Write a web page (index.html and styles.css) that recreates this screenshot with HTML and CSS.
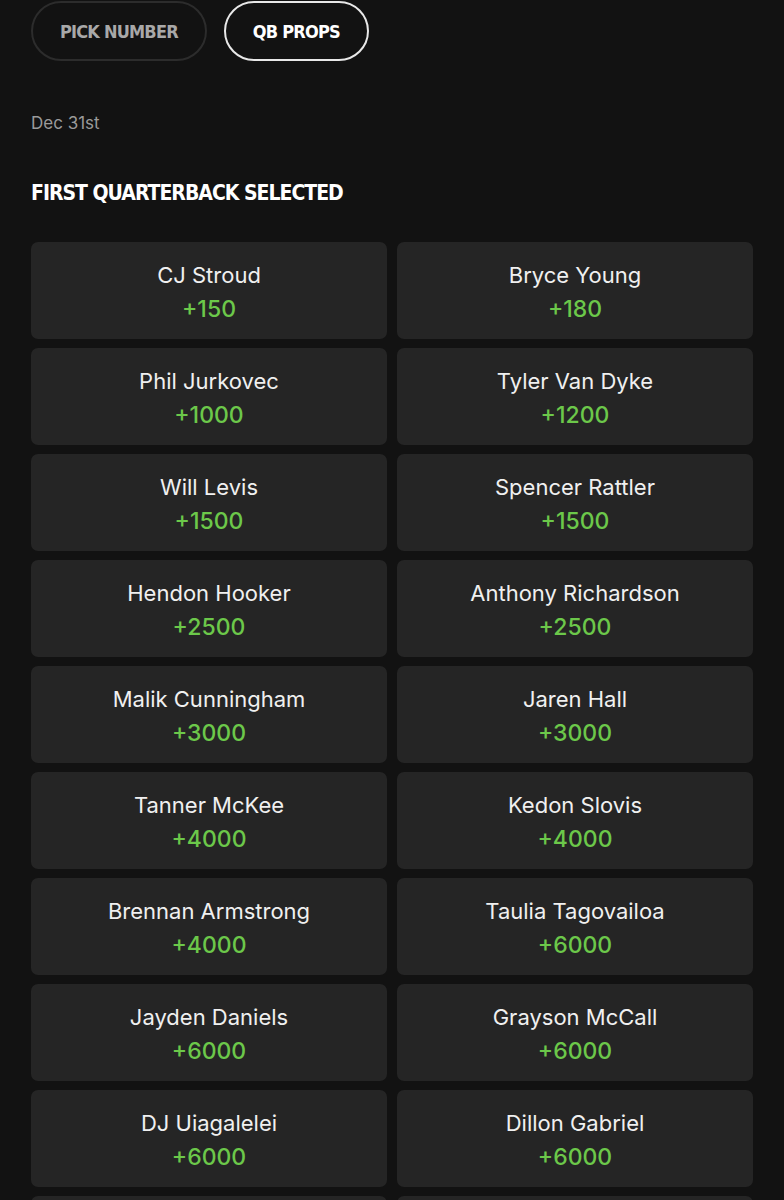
FILE: index.html
```html
<!DOCTYPE html>
<html lang="en">
<head>
  <meta charset="UTF-8">
  <meta name="viewport" content="width=device-width, initial-scale=1.0">
  <title>QB Props</title>
  <link rel="stylesheet" href="styles.css">
</head>
<body>
  <!-- Tabs -->
  <div class="tabs">
    <button class="tab">PICK NUMBER</button>
    <button class="tab active">QB PROPS</button>
  </div>

  <p class="date">Dec 31st</p>

  <h2 class="market-title">FIRST QUARTERBACK SELECTED</h2>

  <!-- Odds grid -->
  <div class="odds-grid">
    <div class="odd-card"><span class="name">CJ Stroud</span><span class="price">+150</span></div>
    <div class="odd-card"><span class="name">Bryce Young</span><span class="price">+180</span></div>
    <div class="odd-card"><span class="name">Phil Jurkovec</span><span class="price">+1000</span></div>
    <div class="odd-card"><span class="name">Tyler Van Dyke</span><span class="price">+1200</span></div>
    <div class="odd-card"><span class="name">Will Levis</span><span class="price">+1500</span></div>
    <div class="odd-card"><span class="name">Spencer Rattler</span><span class="price">+1500</span></div>
    <div class="odd-card"><span class="name">Hendon Hooker</span><span class="price">+2500</span></div>
    <div class="odd-card"><span class="name">Anthony Richardson</span><span class="price">+2500</span></div>
    <div class="odd-card"><span class="name">Malik Cunningham</span><span class="price">+3000</span></div>
    <div class="odd-card"><span class="name">Jaren Hall</span><span class="price">+3000</span></div>
    <div class="odd-card"><span class="name">Tanner McKee</span><span class="price">+4000</span></div>
    <div class="odd-card"><span class="name">Kedon Slovis</span><span class="price">+4000</span></div>
    <div class="odd-card"><span class="name">Brennan Armstrong</span><span class="price">+4000</span></div>
    <div class="odd-card"><span class="name">Taulia Tagovailoa</span><span class="price">+6000</span></div>
    <div class="odd-card"><span class="name">Jayden Daniels</span><span class="price">+6000</span></div>
    <div class="odd-card"><span class="name">Grayson McCall</span><span class="price">+6000</span></div>
    <div class="odd-card"><span class="name">DJ Uiagalelei</span><span class="price">+6000</span></div>
    <div class="odd-card"><span class="name">Dillon Gabriel</span><span class="price">+6000</span></div>
    <!-- next row, only its top edge is on screen -->
    <div class="odd-card"></div>
    <div class="odd-card"></div>
  </div>
</body>
</html>
```

FILE: styles.css
```css
body {
  margin: 0;
  padding: 0 31px;
  background-color: #121212;
  font-family: Inter, "Open Sans", sans-serif;
  color: #f2f2f2;
}

/* Tabs */
.tabs {
  display: flex;
  gap: 17px;
  padding-top: 1px;
}

.tab {
  height: 60px;
  padding: 0 27px;
  border-radius: 30px;
  background: transparent;
  border: 2px solid #2c2c2c;
  color: #a8a8a8;
  font-family: "DejaVu Sans", sans-serif;
  font-stretch: condensed;
  font-weight: bold;
  font-size: 18px;
  letter-spacing: -0.8px;
}

.tab.active {
  border-color: #e8e8e8;
  color: #ffffff;
}

.date {
  margin: 51px 0 0;
  font-size: 17px;
  color: #9a9a9a;
  line-height: 22px;
}

.market-title {
  margin: 45px 0 0;
  font-family: "DejaVu Sans", sans-serif;
  font-stretch: condensed;
  font-weight: bold;
  font-size: 21px;
  line-height: 28px;
  color: #ffffff;
  letter-spacing: -1px;
}

/* Grid */
.odds-grid {
  display: grid;
  grid-template-columns: 1fr 1fr;
  gap: 9px 10px;
  margin-top: 35px;
}

.odd-card {
  height: 97px;
  background: #252525;
  border-radius: 7px;
  display: flex;
  flex-direction: column;
  align-items: center;
  justify-content: center;
  padding-top: 2px;
  box-sizing: border-box;
}

.name {
  font-size: 22px;
  line-height: 34px;
  color: #f0f0f0;
}

.price {
  font-size: 23px;
  font-weight: 500;
  line-height: 34px;
  color: #6cc84a;
}
```
